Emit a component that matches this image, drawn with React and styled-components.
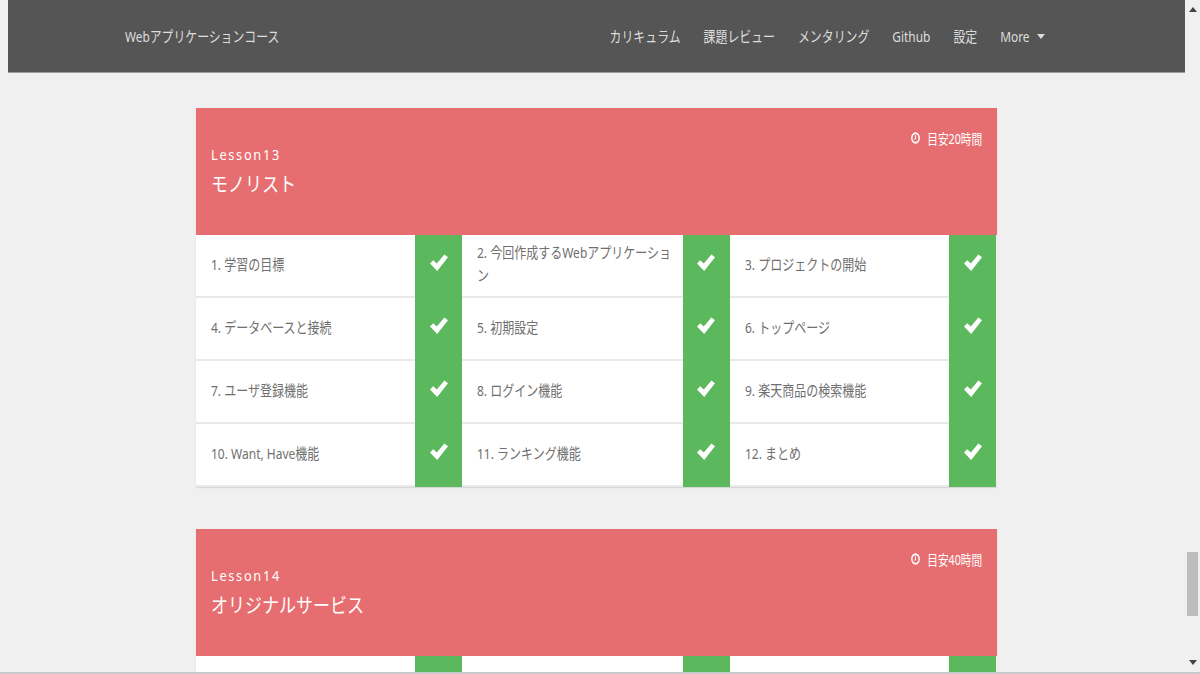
import styled, { createGlobalStyle } from 'styled-components'

const GlobalStyle = createGlobalStyle`
  html, body {
    margin: 0;
    height: 674px;
    overflow: hidden;
    background: #f0f0f0;
    font-family: "Noto Sans", "Noto Sans CJK JP", sans-serif;
  }
`

const lessons = [
  {
    no: 13,
    title: 'モノリスト',
    hours: '目安20時間',
    items: [
      '1. 学習の目標',
      '2. 今回作成するWebアプリケーション',
      '3. プロジェクトの開始',
      '4. データベースと接続',
      '5. 初期設定',
      '6. トップページ',
      '7. ユーザ登録機能',
      '8. ログイン機能',
      '9. 楽天商品の検索機能',
      '10. Want, Have機能',
      '11. ランキング機能',
      '12. まとめ',
    ],
  },
  {
    no: 14,
    title: 'オリジナルサービス',
    hours: '目安40時間',
    items: ['', '', ''],
  },
]

const navItems = ['カリキュラム', '課題レビュー', 'メンタリング', 'Github', '設定']

const ClockIcon = () => (
  <svg width="13" height="12" viewBox="0 0 13 12">
    <circle cx="6.5" cy="6" r="4.8" fill="none" stroke="#fff" strokeWidth="2" />
    <path d="M6.5 3.2V6.4L5.2 7.5" fill="none" stroke="#fff" strokeWidth="1.2" />
  </svg>
)

const CheckIcon = () => (
  <svg width="18" height="17" viewBox="0 0 18 17">
    <path d="M0 9.5L3.2 6.3L6.8 9.6L14.4 0.4L18 3.2L7.2 17Z" fill="#fff" />
  </svg>
)

const App = () => {
  return (
    <Page>
      <GlobalStyle />
      <Main>
        <Navbar>
          <Brand>Webアプリケーションコース</Brand>
          <NavList>
            {navItems.map((item) => (
              <NavLink key={item}>{item}</NavLink>
            ))}
            <NavLink>
              More <Caret />
            </NavLink>
          </NavList>
        </Navbar>
        <Content>
          {lessons.map((lesson) => (
            <Card key={lesson.no}>
              <CardHeader>
                <Hours>
                  <ClockIcon />
                  {lesson.hours}
                </Hours>
                <LessonNo>Lesson{lesson.no}</LessonNo>
                <LessonTitle>{lesson.title}</LessonTitle>
              </CardHeader>
              <Grid>
                {lesson.items.map((item, i) => (
                  <Cell key={i}>
                    <CellText>
                      <CellLabel>{item}</CellLabel>
                    </CellText>
                    <CheckBox>
                      <CheckIcon />
                    </CheckBox>
                  </Cell>
                ))}
              </Grid>
            </Card>
          ))}
        </Content>
      </Main>
      <Scrollbar>
        <ArrowUp />
        <Thumb />
        <ArrowDown />
      </Scrollbar>
    </Page>
  )
}

const Page = styled.div`
  display: flex;
  height: 672px;
  border-bottom: 2px solid #c8c8c8;
  overflow: hidden;
`

const Main = styled.main`
  width: 1177px;
  margin-left: 8px;
  overflow: hidden;
`

const Navbar = styled.nav`
  display: flex;
  align-items: center;
  justify-content: space-between;
  height: 72px;
  padding: 0 140px 0 117px;
  background: #555;
  border-bottom: 1px solid #999;
  color: #ddd;
`

const Brand = styled.div`
  font-size: 15px;
  margin-top: -2px;
  transform: scaleX(0.79);
  transform-origin: left center;
`

/* the reference type is horizontally condensed, so the whole menu is squeezed */
const NavList = styled.div`
  display: flex;
  align-items: center;
  gap: 29px;
  transform: scaleX(0.793);
  transform-origin: right center;
`

const NavLink = styled.span`
  display: flex;
  align-items: center;
  gap: 9px;
  font-size: 15px;
  margin-top: -1px;
`

const Caret = styled.i`
  width: 0;
  height: 0;
  margin-top: 2px;
  border-left: 5px solid transparent;
  border-right: 5px solid transparent;
  border-top: 5px solid #ddd;
`

const Content = styled.div`
  display: flex;
  flex-direction: column;
  gap: 42.4px;
  width: 801px;
  margin-left: 188px;
  padding-top: 35px;
`

const Card = styled.section`
  box-shadow: 0 1px 1px rgba(0, 0, 0, 0.1);
`

const CardHeader = styled.header`
  position: relative;
  box-sizing: border-box;
  height: 127px;
  padding: 36px 15px 0;
  background: #e76e70;
  color: #fff;
`

const Hours = styled.div`
  position: absolute;
  top: 20px;
  right: 15px;
  display: flex;
  align-items: center;
  gap: 9px;
  font-size: 14px;
  transform: scaleX(0.76);
  transform-origin: right center;
`

const LessonNo = styled.div`
  font-size: 15px;
  line-height: 20px;
  letter-spacing: 2px;
  transform: scaleX(0.85);
  transform-origin: left center;
`

const LessonTitle = styled.h2`
  margin: 7px 0 0;
  font-size: 20px;
  font-weight: 400;
  line-height: 28px;
  transform: scaleX(0.85);
  transform-origin: left center;
`

const Grid = styled.div`
  display: grid;
  grid-template-columns: 266.4px 267.6px 266.4px;
  grid-auto-rows: 63px;
`

const Cell = styled.div`
  display: flex;
  box-sizing: border-box;
  background: #fff;
  border-bottom: 2px solid #e9e9e9;
`

const CellText = styled.div`
  display: flex;
  align-items: center;
  flex: 1;
  min-width: 0;
  padding: 0 0 3px 15px;
`

const CellLabel = styled.div`
  flex: none;
  width: 247px;
  font-size: 15px;
  line-height: 23px;
  color: #6f6f6f;
  transform: scaleX(0.8);
  transform-origin: left center;
`

const CheckBox = styled.div`
  display: flex;
  justify-content: center;
  align-items: flex-start;
  flex: none;
  width: 47px;
  margin-bottom: -2px;
  padding-top: 19px;
  background: #5cb85c;
`

const Scrollbar = styled.aside`
  display: flex;
  flex-direction: column;
  align-items: center;
  width: 15px;
`

const ArrowUp = styled.i`
  margin-top: 7px;
  border-left: 4px solid transparent;
  border-right: 4px solid transparent;
  border-bottom: 5px solid #444;
`

const ArrowDown = styled.i`
  margin-top: 44px;
  border-left: 4px solid transparent;
  border-right: 4px solid transparent;
  border-top: 5px solid #444;
`

const Thumb = styled.div`
  width: 11px;
  height: 64px;
  margin-top: 540px;
  background: #bdbdbd;
`

export default App
